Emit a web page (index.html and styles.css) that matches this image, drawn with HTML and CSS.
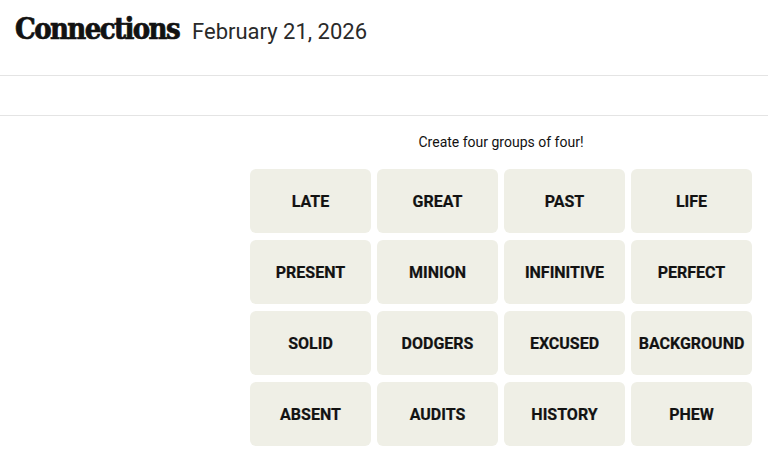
FILE: index.html
```html
<!DOCTYPE html>
<html lang="en">
<head>
<meta charset="utf-8">
<title>Connections</title>
<link rel="stylesheet" href="styles.css">
</head>
<body>
<header class="masthead">
  <h1 class="title">Connections</h1>
  <span class="date">February 21, 2026</span>
</header>
<div class="toolbar"></div>
<main class="board">
  <p class="prompt">Create four groups of four!</p>
  <div class="grid">
    <button class="tile">LATE</button>
    <button class="tile">GREAT</button>
    <button class="tile">PAST</button>
    <button class="tile">LIFE</button>
    <button class="tile">PRESENT</button>
    <button class="tile">MINION</button>
    <button class="tile">INFINITIVE</button>
    <button class="tile">PERFECT</button>
    <button class="tile">SOLID</button>
    <button class="tile">DODGERS</button>
    <button class="tile">EXCUSED</button>
    <button class="tile">BACKGROUND</button>
    <button class="tile">ABSENT</button>
    <button class="tile">AUDITS</button>
    <button class="tile">HISTORY</button>
    <button class="tile">PHEW</button>
  </div>
</main>
</body>
</html>
```
FILE: styles.css
```css
html, body {
  margin: 0;
  padding: 0;
  background: #ffffff;
  color: #121212;
}

.masthead {
  height: 76px;
  box-sizing: border-box;
  border-bottom: 1px solid #e4e4e4;
  display: flex;
  align-items: baseline;
  padding: 4px 0 0 15px;
}

.title {
  margin: 0;
  font-family: "DejaVu Serif", serif;
  font-weight: 700;
  font-stretch: condensed;
  font-size: 29px;
  line-height: 50px;
  letter-spacing: -1.6px;
  -webkit-text-stroke: 0.7px #121212;
}

.date {
  margin-left: 13px;
  font-family: Roboto, "Liberation Sans", sans-serif;
  font-size: 22px;
  font-weight: 400;
  color: #2a2a2a;
}

.toolbar {
  height: 40px;
  box-sizing: border-box;
  border-bottom: 1px solid #e4e4e4;
}

.board {
  width: 502px;
  margin: 0 16px 0 auto;
  font-family: Roboto, "Liberation Sans", sans-serif;
}

.prompt {
  margin: 16px 0 17px;
  font-size: 14px;
  line-height: 20px;
  text-align: center;
  color: #121212;
}

.grid {
  display: grid;
  grid-template-columns: repeat(4, 1fr);
  grid-auto-rows: 64px;
  gap: 7px 6px;
}

.tile {
  border: 0;
  border-radius: 6px;
  background: #efefe6;
  color: #121212;
  font-family: Roboto, "Liberation Sans", sans-serif;
  font-weight: 700;
  font-size: 16px;
  padding: 0;
  -webkit-text-stroke: 0.2px #121212;
}
```
